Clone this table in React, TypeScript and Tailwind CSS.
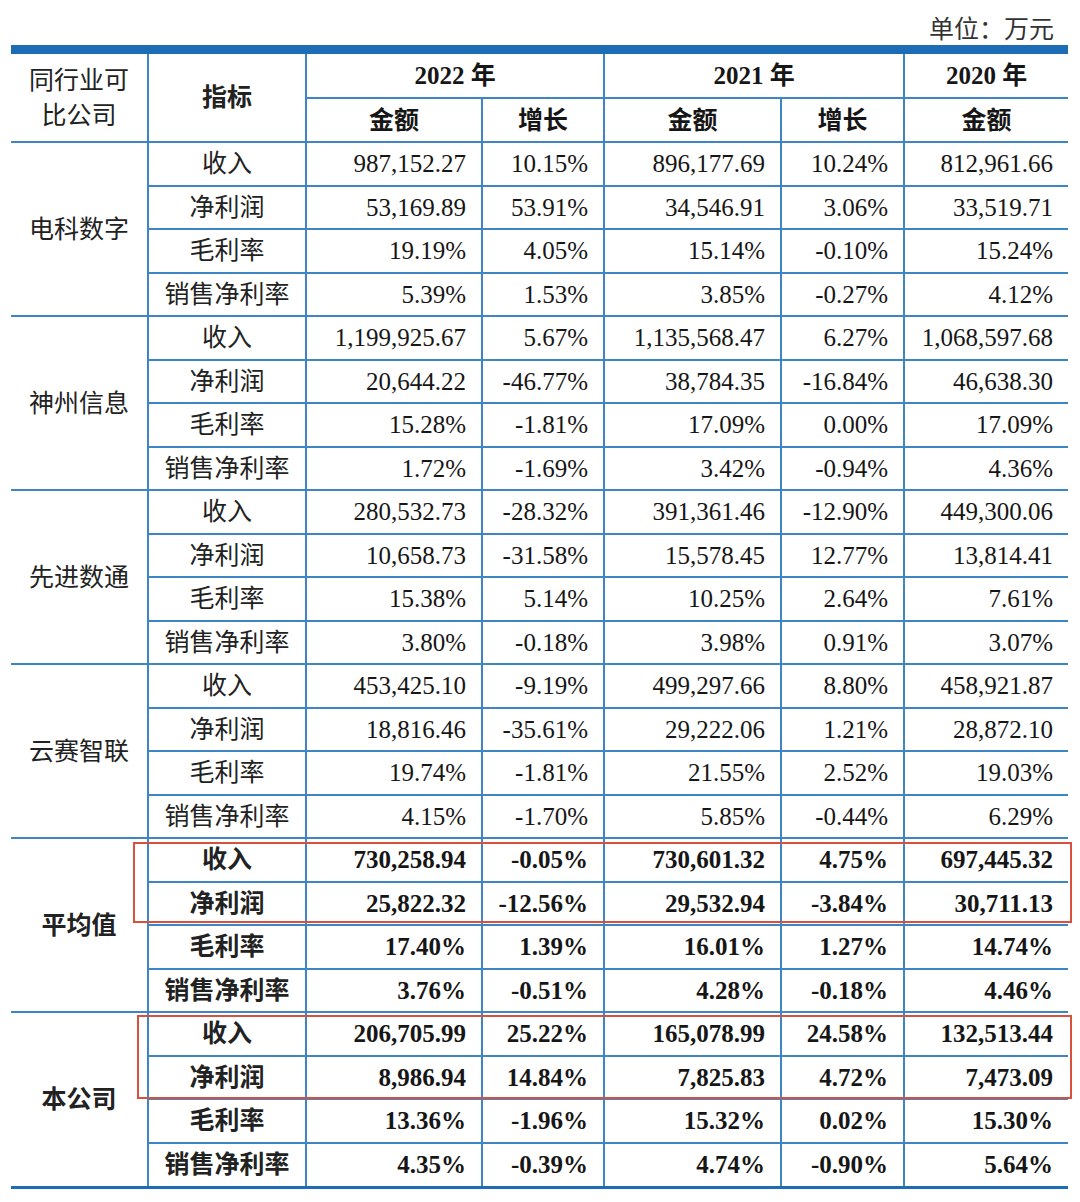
import React from "react";

type Group = { name: string; strong: boolean; rows: string[][] };

const groups: Group[] = [
  {
    name: "电科数字",
    strong: false,
    rows: [
      ["收入", "987,152.27", "10.15%", "896,177.69", "10.24%", "812,961.66"],
      ["净利润", "53,169.89", "53.91%", "34,546.91", "3.06%", "33,519.71"],
      ["毛利率", "19.19%", "4.05%", "15.14%", "-0.10%", "15.24%"],
      ["销售净利率", "5.39%", "1.53%", "3.85%", "-0.27%", "4.12%"],
    ],
  },
  {
    name: "神州信息",
    strong: false,
    rows: [
      ["收入", "1,199,925.67", "5.67%", "1,135,568.47", "6.27%", "1,068,597.68"],
      ["净利润", "20,644.22", "-46.77%", "38,784.35", "-16.84%", "46,638.30"],
      ["毛利率", "15.28%", "-1.81%", "17.09%", "0.00%", "17.09%"],
      ["销售净利率", "1.72%", "-1.69%", "3.42%", "-0.94%", "4.36%"],
    ],
  },
  {
    name: "先进数通",
    strong: false,
    rows: [
      ["收入", "280,532.73", "-28.32%", "391,361.46", "-12.90%", "449,300.06"],
      ["净利润", "10,658.73", "-31.58%", "15,578.45", "12.77%", "13,814.41"],
      ["毛利率", "15.38%", "5.14%", "10.25%", "2.64%", "7.61%"],
      ["销售净利率", "3.80%", "-0.18%", "3.98%", "0.91%", "3.07%"],
    ],
  },
  {
    name: "云赛智联",
    strong: false,
    rows: [
      ["收入", "453,425.10", "-9.19%", "499,297.66", "8.80%", "458,921.87"],
      ["净利润", "18,816.46", "-35.61%", "29,222.06", "1.21%", "28,872.10"],
      ["毛利率", "19.74%", "-1.81%", "21.55%", "2.52%", "19.03%"],
      ["销售净利率", "4.15%", "-1.70%", "5.85%", "-0.44%", "6.29%"],
    ],
  },
  {
    name: "平均值",
    strong: true,
    rows: [
      ["收入", "730,258.94", "-0.05%", "730,601.32", "4.75%", "697,445.32"],
      ["净利润", "25,822.32", "-12.56%", "29,532.94", "-3.84%", "30,711.13"],
      ["毛利率", "17.40%", "1.39%", "16.01%", "1.27%", "14.74%"],
      ["销售净利率", "3.76%", "-0.51%", "4.28%", "-0.18%", "4.46%"],
    ],
  },
  {
    name: "本公司",
    strong: true,
    rows: [
      ["收入", "206,705.99", "25.22%", "165,078.99", "24.58%", "132,513.44"],
      ["净利润", "8,986.94", "14.84%", "7,825.83", "4.72%", "7,473.09"],
      ["毛利率", "13.36%", "-1.96%", "15.32%", "0.02%", "15.30%"],
      ["销售净利率", "4.35%", "-0.39%", "4.74%", "-0.90%", "5.64%"],
    ],
  },
];

const line = "border-2 border-[#3d85c4]";

export default function App() {
  return (
    <div className="relative w-[1080px] h-[1202px] bg-white text-[#161616] font-['Liberation_Serif','Noto_Sans_CJK_SC',serif]">
      {/* unit caption */}
      <div className="flex justify-end h-[45px] pt-[13px] pr-[26px]">
        <span className="text-[25px] leading-[28px] text-[#333] font-['Noto_Sans_CJK_SC',sans-serif]">单位：万元</span>
      </div>

      <div className="ml-[11px] w-[1057px] h-[9px] bg-[#1d6db6]" />

      <table className="ml-[11px] w-[1057px] table-fixed border-collapse text-[25px] leading-none">
        <colgroup>
          <col className="w-[137px]" />
          <col className="w-[158px]" />
          <col className="w-[176px]" />
          <col className="w-[122px]" />
          <col className="w-[177px]" />
          <col className="w-[123px]" />
          <col className="w-[164px]" />
        </colgroup>
        <thead>
          <tr className="h-[44px]">
            <th rowSpan={2} className={`${line} border-t-0 border-l-0 font-normal leading-[35px] text-[#222]`}>
              同行业可<br />比公司
            </th>
            <th rowSpan={2} className={`${line} border-t-0 font-bold text-[#222]`}>指标</th>
            <th colSpan={2} className={`${line} border-t-0 font-bold`}>2022 年</th>
            <th colSpan={2} className={`${line} border-t-0 font-bold`}>2021 年</th>
            <th className={`${line} border-t-0 border-r-0 font-bold`}>2020 年</th>
          </tr>
          <tr className="h-[44px]">
            <th className={`${line} font-bold`}>金额</th>
            <th className={`${line} font-bold`}>增长</th>
            <th className={`${line} font-bold`}>金额</th>
            <th className={`${line} font-bold`}>增长</th>
            <th className={`${line} border-r-0 font-bold`}>金额</th>
          </tr>
        </thead>
        <tbody>
          {groups.map((g, gi) => {
            const last = gi === groups.length - 1;
            return g.rows.map((r, ri) => {
              const bottom = last && ri === 3 ? "border-b-0" : "";
              const weight = g.strong ? "font-bold" : "font-normal";
              return (
                <tr key={g.name + ri} className="h-[43.5px]">
                  {ri === 0 && (
                    <td rowSpan={4} className={`${line} border-l-0 ${last ? "border-b-0" : ""} text-center text-[#222] ${weight}`}>
                      {g.name}
                    </td>
                  )}
                  <td className={`${line} ${bottom} text-center text-[#222] ${weight}`}>{r[0]}</td>
                  {r.slice(1).map((v, i) => (
                    <td
                      key={i}
                      className={`${line} ${bottom} ${i === 4 ? "border-r-0" : ""} text-right pr-[15px] ${weight}`}
                    >
                      {v}
                    </td>
                  ))}
                </tr>
              );
            });
          })}
        </tbody>
      </table>

      <div className="ml-[11px] w-[1057px] h-[3px] bg-[#1d6db6]" />

      {/* highlighted rows */}
      <div className="absolute left-[133px] top-[842px] w-[939px] h-[81px] border-2 border-[#d9513d]" />
      <div className="absolute left-[137px] top-[1015px] w-[935px] h-[84px] border-2 border-[#d9513d]" />
    </div>
  );
}
